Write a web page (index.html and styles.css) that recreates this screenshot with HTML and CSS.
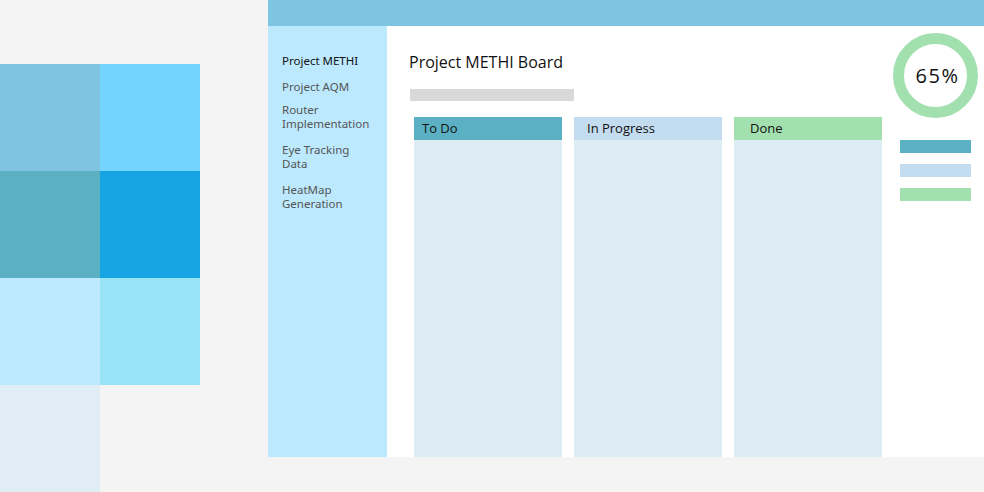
FILE: index.html
```html
<!DOCTYPE html>
<html lang="en">
<head>
<meta charset="UTF-8">
<meta name="viewport" content="width=device-width, initial-scale=1.0">
<title>Project METHI Board</title>
<link rel="stylesheet" href="styles.css">
</head>
<body>
<div class="stage">
    <div class="swatches">
        <div class="sw sw1"></div>
        <div class="sw sw2"></div>
        <div class="sw sw3"></div>
        <div class="sw sw4"></div>
        <div class="sw sw5"></div>
        <div class="sw sw6"></div>
        <div class="sw sw7"></div>
    </div>

    <div class="app">
        <div class="topbar"></div>
        <div class="sidebar">
            <div class="nav-item active">Project METHI</div>
            <div class="nav-item short">Project AQM</div>
            <div class="nav-item">Router<br>Implementation</div>
            <div class="nav-item">Eye Tracking<br>Data</div>
            <div class="nav-item">HeatMap<br>Generation</div>
        </div>
        <div class="main">
            <div class="board">
                <div class="title">Project METHI Board</div>
                <div class="placeholder"></div>
                <div class="columns">
                    <div class="col">
                        <div class="col-head todo">To Do</div>
                    </div>
                    <div class="col">
                        <div class="col-head progress">In Progress</div>
                    </div>
                    <div class="col">
                        <div class="col-head done">Done</div>
                    </div>
                </div>
            </div>
            <div class="aside">
                <div class="donut">65%</div>
                <div class="legend">
                    <div class="legend-bar todo"></div>
                    <div class="legend-bar progress"></div>
                    <div class="legend-bar done"></div>
                </div>
            </div>
        </div>
    </div>
</div>
</body>
</html>
```

FILE: styles.css
```css
html, body {
    margin: 0;
    padding: 0;
}
body {
    background: #f4f4f4;
    font-family: "Noto Sans", "Open Sans", sans-serif;
    overflow: hidden;
}
.stage {
    display: flex;
    width: 984px;
    height: 492px;
}

/* colour swatches on the left */
.swatches {
    display: grid;
    grid-template-columns: 100px 100px;
    grid-auto-rows: 107px;
    margin-top: 64px;
    margin-right: 68px;
}
.sw1 { background: #7fc4e0; }
.sw2 { background: #73d4fe; }
.sw3 { background: #5bb1c3; }
.sw4 { background: #17a4e2; }
.sw5 { background: #bde9fe; }
.sw6 { background: #99e3f6; }
.sw7 { background: #e0edf4; }

/* app window */
.app {
    display: grid;
    grid-template-columns: 119px 1fr;
    grid-template-rows: 26px 1fr;
    width: 716px;
    height: 457px;
}
.topbar {
    grid-column: 1 / 3;
    background: #7ec5e2;
}
.sidebar {
    background: #bce9fe;
    padding: 28px 0 0 14px;
    display: flex;
    flex-direction: column;
    gap: 12px;
}
.nav-item {
    font-size: 11.5px;
    line-height: 14px;
    color: #555;
}
.nav-item.active {
    color: #111;
}
.nav-item.short {
    margin-bottom: -3px;
}

.main {
    background: #fff;
    display: flex;
}
.board {
    width: 473px;
    padding: 26px 0 0 22px;
    display: flex;
    flex-direction: column;
}
.title {
    font-family: "Open Sans", sans-serif;
    font-size: 16px;
    line-height: 20px;
    color: #111;
}
.placeholder {
    width: 164px;
    height: 12px;
    margin: 17px 0 0 1px;
    background: #d9d9d9;
}
.columns {
    flex: 1;
    display: flex;
    gap: 12px;
    margin: 16px 0 0 5px;
}
.col {
    width: 148px;
    background: #deedf4;
}
.col-head {
    height: 23px;
    line-height: 23px;
    font-family: "Open Sans", sans-serif;
    font-size: 13px;
    color: #111;
}
.col-head.todo {
    background: #5bb1c3;
    padding-left: 8px;
}
.col-head.progress {
    background: #c4dcf0;
    padding-left: 13px;
}
.col-head.done {
    background: #a2e0b0;
    padding-left: 16px;
}

.aside {
    margin-left: 11px;
    padding-top: 7px;
}
.donut {
    box-sizing: border-box;
    width: 85px;
    height: 85px;
    padding-left: 4px;
    border: 11px solid #a2e0b0;
    border-radius: 50%;
    display: flex;
    align-items: center;
    justify-content: center;
    font-family: "Open Sans", sans-serif;
    font-size: 20px;
    letter-spacing: 1.5px;
    color: #111;
}
.legend {
    display: flex;
    flex-direction: column;
    gap: 11px;
    margin: 22px 0 0 7px;
}
.legend-bar {
    width: 71px;
    height: 13px;
}
.legend-bar.todo { background: #5bb1c3; }
.legend-bar.progress { background: #c4dcf0; }
.legend-bar.done { background: #a2e0b0; }
```
